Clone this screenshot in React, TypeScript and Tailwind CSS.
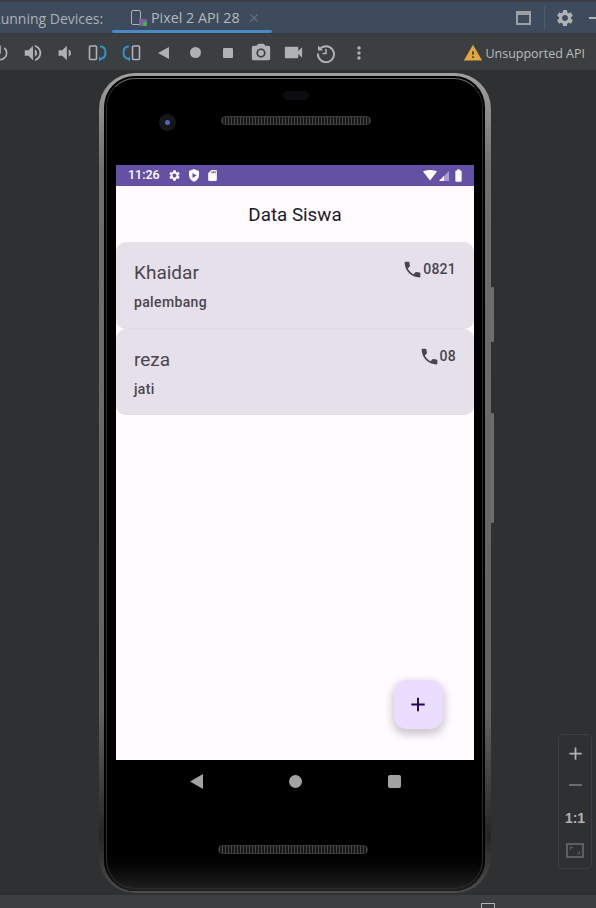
import React from 'react';
import {
  MdPhone,
  MdSettings,
  MdCameraAlt,
  MdVideocam,
  MdMoreVert,
  MdWarning,
  MdSdCard,
  MdBatteryFull,
  MdAdd,
  MdVolumeUp,
  MdVolumeDown,
  MdPowerSettingsNew,
  MdClose,
} from 'react-icons/md';

const STUDENTS = [
  { name: 'Khaidar', city: 'palembang', phone: '0821' },
  { name: 'reza', city: 'jati', phone: '08' },
];

function RotateIcon({ flip }: { flip?: boolean }) {
  return (
    <svg width="20" height="18" viewBox="0 0 20 18" fill="none" className={flip ? '-scale-x-100' : ''}>
      <rect x="1.500" y="2" width="7" height="13.500" rx="1" stroke="#afb1b3" strokeWidth="1.600" />
      <path d="M12 2.500c4.500 0 5.500 3 5.500 6s-1 6-5.500 6.500" stroke="#3592c4" strokeWidth="2" />
      <path d="M11 12.500v5l3-2.500z" fill="#3592c4" />
    </svg>
  );
}

function SnapshotHistoryIcon() {
  return (
    <svg width="20" height="20" viewBox="0 0 20 20" fill="none" stroke="#afb1b3" strokeWidth="2">
      <path d="M3.500 6.500A8 8 0 1 1 2 10.500" />
      <path d="M2 2.500v5h5" fill="#afb1b3" stroke="none" />
      <path d="M10 6v4.500H6.500" strokeWidth="1.600" />
    </svg>
  );
}

function Speaker({ className }: { className: string }) {
  // dotted grille of the handset
  return (
    <div
      className={`absolute h-[9px] rounded-full border border-[#3a3a3a] bg-[repeating-linear-gradient(90deg,#4a4a48_0px,#4a4a48_1px,#161616_1px,#161616_3px)] ${className}`}
    />
  );
}

function Cell({ children }: { children: React.ReactNode }) {
  return <div className="flex w-[32.600px] shrink-0 items-center justify-center">{children}</div>;
}

function Toolbar() {
  return (
    <div className="relative flex h-[36px] items-center overflow-hidden border-b border-[#37393b] bg-[#3c3f41] pt-[2px] text-[#afb1b3]">
      <div className="ml-[-16px] flex items-center">
        <Cell><MdPowerSettingsNew size={20} /></Cell>
        <Cell><MdVolumeUp size={22} /></Cell>
        <Cell><MdVolumeDown size={22} /></Cell>
        <Cell><RotateIcon /></Cell>
        <Cell><RotateIcon flip /></Cell>
        <Cell>
          <svg width="11" height="12" viewBox="0 0 11 12"><path d="M11 0v12L0 6z" fill="#afb1b3" /></svg>
        </Cell>
        <Cell><span className="h-[11px] w-[11px] rounded-full bg-[#afb1b3]" /></Cell>
        <Cell><span className="h-[10px] w-[10px] rounded-[1px] bg-[#afb1b3]" /></Cell>
        <Cell><MdCameraAlt size={22} /></Cell>
        <Cell><MdVideocam size={23} /></Cell>
        <Cell><SnapshotHistoryIcon /></Cell>
        <Cell><MdMoreVert size={20} /></Cell>
      </div>
      <div className="ml-auto flex items-center gap-[2px] pr-[11px]">
        <MdWarning size={20} className="text-[#e2a73f]" />
        <span className="pt-[3px] font-['Open_Sans',sans-serif] text-[12.500px] text-[#bbbbbb]">Unsupported API</span>
      </div>
    </div>
  );
}

function TitleBar() {
  return (
    <div className="relative flex h-[34px] shrink-0 items-center overflow-hidden border-b border-t-2 border-b-[#33373b] border-t-[#3c3f41] bg-[#3d4b5c] pt-px font-['Open_Sans',sans-serif] text-[#afb1b3]">
      <span className="ml-[-8px] w-[139px] shrink-0 whitespace-nowrap text-[14px]">Running Devices:</span>
      <div className="flex items-center gap-[4px]">
        <div className="relative h-[16px] w-[16px]">
          <div className="h-[15px] w-[10px] rounded-[2px] border border-[#afb1b3]" />
          <div className="absolute bottom-0 right-0 h-[7px] w-[8px] bg-[#7d5fa8]" />
          <div className="absolute bottom-0 right-0 h-[4px] w-[4px] rounded-full bg-[#21d321]" />
        </div>
        <span className="text-[14.300px] text-[#b4b8bc]">Pixel 2 API 28</span>
        <MdClose size={14} className="ml-[3px] text-[#6b7580]" />
      </div>
      <div className="absolute bottom-0 left-[112px] h-[3px] w-[160px] rounded-full bg-[#4a88c7]" />
      <div className="ml-auto flex items-center">
        <div className="h-[14px] w-[15px] border-2 border-t-[4px] border-[#9da0a3]" />
        <div className="ml-[13px] mr-[10px] h-[24px] w-px bg-[#4e5a68]" />
        <MdSettings size={20} />
        <div className="ml-[14px] mr-[-5px] h-[2px] w-[12px] bg-[#afb1b3]" />
      </div>
    </div>
  );
}

function StudentCard({ name, city, phone }: { name: string; city: string; phone: string }) {
  return (
    <div className="flex h-[86.500px] items-start justify-between rounded-[10px] border-b border-[#e0dbe4] bg-[#e6e0ea] px-[18px] pt-[19px] text-[#49454f]">
      <div>
        <div className="text-[19px] leading-[24px]">{name}</div>
        <div className="mt-[7px] text-[14px] font-medium leading-[20px] tracking-[0.350px]">{city}</div>
      </div>
      <div className="-mt-[2px] flex items-center">
        <MdPhone size={21} />
        <span className="text-[14px] font-medium tracking-[0.250px]">{phone}</span>
      </div>
    </div>
  );
}

function StatusBar() {
  return (
    <div className="flex h-[21px] items-center justify-between bg-[#6451a3] pl-[12px] pr-[8px] text-white">
      <div className="flex items-center gap-[6.500px]">
        <span className="mr-[2px] text-[12.500px] font-medium leading-none">11:26</span>
        <MdSettings size={13} />
        <svg width="12" height="13" viewBox="0 0 12 13">
          <path d="M6 0l5 2v4.500c0 3-2.200 5.200-5 6.200-2.800-1-5-3.200-5-6.200V2z" fill="white" />
          <path d="M4.500 4v5L8.500 6.500z" fill="#6451a3" />
        </svg>
        <MdSdCard size={13} />
      </div>
      <div className="flex items-center">
        <svg width="30" height="12" viewBox="0 0 30 12">
          <path d="M0 1.500C4 -0.500 10 -0.500 14 1.500L7 10.500z" fill="white" />
          <path d="M16 11L26 1v10z" fill="white" fillOpacity="0.45" />
          <path d="M16 11l5-5v5z" fill="white" />
        </svg>
        <MdBatteryFull size={15} className="ml-[-2px]" />
      </div>
    </div>
  );
}

function Screen() {
  return (
    <div className="relative flex h-[595px] w-[358px] flex-col overflow-hidden bg-[#fffbfe] font-['Roboto',sans-serif]">
      <StatusBar />
      <div className="flex h-[56px] shrink-0 items-center justify-center pt-[2px] text-[18.800px] text-[#1c1b1f]">Data Siswa</div>
      <div className="flex flex-col">
        {STUDENTS.map((s) => (
          <StudentCard key={s.name} name={s.name} city={s.city} phone={s.phone} />
        ))}
      </div>
      {/* FAB */}
      <div className="absolute bottom-[31px] right-[31px] flex h-[49px] w-[49px] items-center justify-center rounded-[13px] bg-[#eaddff] text-[#21005d] shadow-[0_4px_8px_2px_rgba(0,0,0,0.2)]">
        <MdAdd size={23} className="-translate-x-[0.5px]" />
      </div>
    </div>
  );
}

function Phone() {
  return (
    <div className="absolute left-[99px] top-[3px] h-[820px] w-[392px] rounded-[36px] bg-[linear-gradient(180deg,#a0a0a0_0%,#6e6e6e_12%,#626262_78%,#262626_93%,#4c4c4c_100%)]">
      {/* black body with a faint inner ring */}
      <div className="absolute bottom-[2px] left-[5px] right-[6px] top-[3px] overflow-hidden rounded-[31px] bg-black">
        <div className="absolute inset-x-0 bottom-0 h-[50px] bg-gradient-to-b from-black to-[#212121]" />
        <div className="absolute inset-[2px] rounded-[29px] border border-[#2c2c2c] border-t-[#6a6a6a]" />
      </div>

      {/* side buttons */}
      <div className="absolute left-[392px] top-[214px] h-[55px] w-[3px] rounded-[1px] bg-[#6e6e6e]" />
      <div className="absolute left-[392px] top-[340px] h-[110px] w-[3px] rounded-[1px] bg-[#6e6e6e]" />

      {/* earpiece, sensor and camera */}
      <div className="absolute left-[184px] top-[18px] h-[9px] w-[26px] rounded-full bg-[#0c0d10]" />
      <Speaker className="left-[122px] top-[43px] w-[150px]" />
      <div className="absolute left-[60px] top-[41px] flex h-[17px] w-[17px] items-center justify-center rounded-full bg-[#15171d]">
        <div className="h-[5px] w-[5px] rounded-full bg-[#5565b8]" />
      </div>

      <div className="absolute left-[17px] top-[92px]">
        <Screen />
      </div>

      {/* nav buttons */}
      <div className="absolute left-[17px] top-[701px] flex w-[358px] items-center justify-center gap-[86px]">
        <svg width="13" height="15" viewBox="0 0 13 15"><path d="M13 0v15L0 7.500z" fill="#a3a3a3" /></svg>
        <span className="h-[13px] w-[13px] rounded-full bg-[#a3a3a3]" />
        <span className="h-[13px] w-[13px] rounded-[2px] bg-[#a3a3a3]" />
      </div>
      <Speaker className="left-[119px] top-[772px] w-[150px]" />
    </div>
  );
}

function ZoomControls() {
  return (
    <div className="absolute left-[558px] top-[664px] flex h-[135px] w-[34px] flex-col items-center rounded-[5px] border border-[#3c3f41] pt-[8px] text-[#afb1b3]">
      <MdAdd size={21} />
      <div className="mt-[20px] h-[2px] w-[13px] bg-[#6a6c6e]" />
      <span className="mt-[24px] font-['Liberation_Sans',sans-serif] text-[14px] font-bold leading-[16px]">1:1</span>
      <div className="relative mt-[17px] h-[15px] w-[18px] border-2 border-[#5c5e60]">
        <div className="absolute left-[2px] top-[2px] h-[3px] w-[3px] border-l border-t border-[#5c5e60]" />
        <div className="absolute bottom-[2px] right-[2px] h-[3px] w-[3px] border-b border-r border-[#5c5e60]" />
      </div>
    </div>
  );
}

export default function App() {
  return (
    <div className="flex h-[908px] w-[596px] flex-col overflow-hidden bg-[#2f3031]">
      <TitleBar />
      <Toolbar />
      <div className="relative flex-1">
        <Phone />
        <ZoomControls />
      </div>
      <div className="relative h-[13px] shrink-0 bg-[#3c3f41]">
        <div className="absolute left-[481px] top-[8px] h-[5px] w-[14px] rounded-t-[1px] border border-b-0 border-[#afb1b3]" />
      </div>
    </div>
  );
}
